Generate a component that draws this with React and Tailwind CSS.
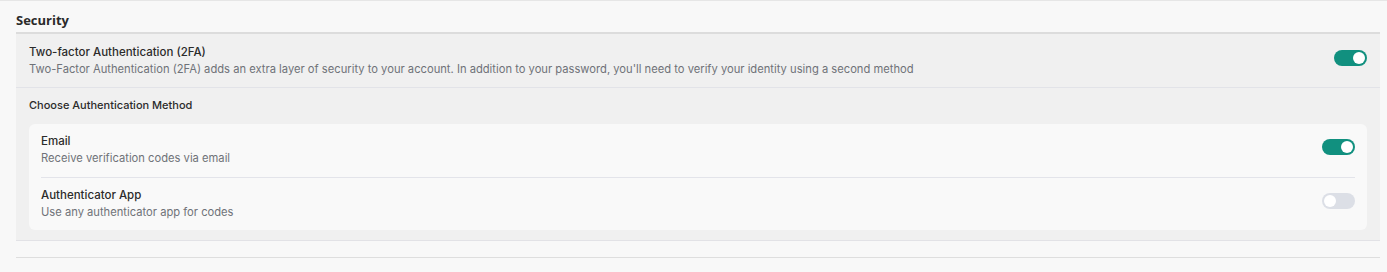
import React from 'react';

function Toggle({ on }) {
  return (
    <div
      className={`relative mb-[6px] h-4 w-[33px] shrink-0 rounded-full ${on ? 'bg-[#11907f]' : 'bg-[#dcdfe6]'}`}
    >
      <div
        className={`absolute top-[2px] h-3 w-3 rounded-full bg-white ${on ? 'right-[2px]' : 'left-[2px]'}`}
      />
    </div>
  );
}

function Text({ title, desc }) {
  return (
    <div className="flex flex-col gap-[3px]">
      <span className="text-[11.5px] font-medium leading-[14px] text-[#2b2b2b]">{title}</span>
      <span className="text-[11.2px] leading-[14px] text-[#6f7278]">{desc}</span>
    </div>
  );
}

export default function App() {
  return (
    <div className="h-[272px] w-full border-t border-[#e6e6e6] bg-[#f8f8f8] pl-4 pr-[7px] font-['Inter',sans-serif]">
      <h2 className="pt-[11px] pb-[3px] font-['Open_Sans',sans-serif] text-[13px] font-bold leading-[17px] text-[#2a2a2a]">
        Security
      </h2>
      <div className="border-t-2 border-b border-t-[#dcdcdc] border-b-[#e2e2e6] bg-[#f0f0f0]">
        <div className="flex items-center justify-between border-b border-[#e2e3e8] px-[13px] pt-[11px] pb-[11px]">
          <Text
            title="Two-factor Authentication (2FA)"
            desc="Two-Factor Authentication (2FA) adds an extra layer of security to your account. In addition to your password, you'll need to verify your identity using a second method"
          />
          <Toggle on />
        </div>
        <div className="px-[13px] pt-[10px] pb-[10px]">
          <div className="text-[11px] font-medium leading-[14px] text-[#2b2b2b]">Choose Authentication Method</div>
          <div className="mt-[12px] rounded-md bg-[#f9f9f9] px-3">
            <div className="flex items-center justify-between border-b border-[#e3e4ea] pt-[10px] pb-[12px]">
              <Text title="Email" desc="Receive verification codes via email" />
              <Toggle on />
            </div>
            <div className="flex items-center justify-between pt-[10px] pb-[11px]">
              <Text title="Authenticator App" desc="Use any authenticator app for codes" />
              <Toggle />
            </div>
          </div>
        </div>
      </div>
      <div className="mt-4 border-t border-[#dedede]" />
    </div>
  );
}
